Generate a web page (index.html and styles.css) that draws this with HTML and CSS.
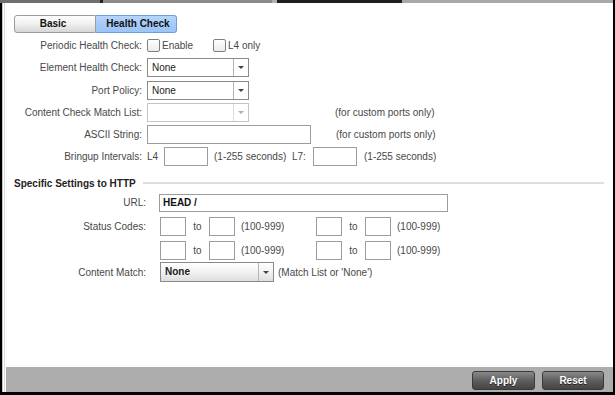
FILE: index.html
```html
<!DOCTYPE html>
<html>
<head>
<meta charset="utf-8">
<link rel="stylesheet" href="styles.css">
</head>
<body>
<div class="page">
  <div class="topstrip">
    <span class="ts ts-a"></span><span class="ts ts-tick"></span><span class="ts ts-b"></span><span class="ts ts-tick2"></span><span class="ts ts-d"></span><span class="ts ts-c"></span>
  </div>
  <div class="frame">
    <div class="wrap">
      <div class="content">
        <div class="tabs">
          <div class="tab tab-basic">Basic</div>
          <div class="tab tab-active">Health Check</div>
        </div>

        <div class="form general">
          <div class="lbl">Periodic Health Check:</div>
          <div class="ctl">
            <span class="cb"></span><span class="cb-text w-enable">Enable</span>
            <span class="cb"></span><span class="cb-text">L4 only</span>
          </div>

          <div class="lbl">Element Health Check:</div>
          <div class="ctl">
            <div class="sel w102"><span class="val">None</span><span class="arr"><i></i></span></div>
          </div>

          <div class="lbl">Port Policy:</div>
          <div class="ctl">
            <div class="sel w102"><span class="val">None</span><span class="arr"><i></i></span></div>
          </div>

          <div class="lbl">Content Check Match List:</div>
          <div class="ctl">
            <div class="sel w102 disabled"><span class="val"></span><span class="arr"><i></i></span></div>
            <span class="note note-cc">(for custom ports only)</span>
          </div>

          <div class="lbl">ASCII String:</div>
          <div class="ctl">
            <div class="inp w164"></div>
            <span class="note note-ascii">(for custom ports only)</span>
          </div>

          <div class="lbl">Bringup Intervals:</div>
          <div class="ctl">
            <span class="w17">L4</span>
            <div class="inp w44"></div>
            <span class="secs">(1-255 seconds)</span>
            <span class="w21">L7:</span>
            <div class="inp w44"></div>
            <span class="secs2">(1-255 seconds)</span>
          </div>
        </div>

        <div class="section-head">
          <span class="section-title">Specific Settings to HTTP</span>
          <span class="rule"></span>
        </div>

        <div class="form http">
          <div class="lbl">URL:</div>
          <div class="ctl">
            <div class="inp url"><span>HEAD /</span></div>
          </div>

          <div class="lbl">Status Codes:</div>
          <div class="ctl">
            <div class="inp w26"></div><span class="to">to</span><div class="inp w26"></div><span class="range">(100-999)</span>
            <div class="inp w26"></div><span class="to">to</span><div class="inp w26"></div><span class="range">(100-999)</span>
          </div>

          <div class="lbl"></div>
          <div class="ctl">
            <div class="inp w26"></div><span class="to">to</span><div class="inp w26"></div><span class="range">(100-999)</span>
            <div class="inp w26"></div><span class="to">to</span><div class="inp w26"></div><span class="range">(100-999)</span>
          </div>

          <div class="lbl">Content Match:</div>
          <div class="ctl">
            <div class="sel cm"><span class="val">None</span><span class="arr"><i></i></span></div>
            <span class="note note-cm">(Match List or 'None')</span>
          </div>
        </div>
      </div>
      <div class="footer">
        <div class="btn">Apply</div>
        <div class="btn">Reset</div>
      </div>
    </div>
  </div>
</div>
</body>
</html>
```

FILE: styles.css
```css
* { box-sizing: border-box; }
html, body { margin: 0; padding: 0; }
body {
  width: 615px;
  height: 395px;
  background: #000;
  font-family: "Liberation Sans", Arial, sans-serif;
  font-size: 10px;
  color: #3c3c3c;
  overflow: hidden;
}
.page {
  width: 615px;
  height: 395px;
  background: #000;
}
.topstrip {
  display: flex;
  height: 3px;
  width: 613px;
}
.ts { height: 3px; }
.ts-a { width: 100px; background: #6e6e6e; }
.ts-tick { width: 3px; background: #222; }
.ts-b { width: 169px; background: #8a8a8a; }
.ts-tick2 { width: 5px; background: #b0b0b0; }
.ts-d { width: 125px; background: #1e1e1e; }
.ts-c { flex: 1; background: #a8a8a8; }

.frame {
  margin-left: 2px;
  width: 611px;
  height: 389px;
  border-left: 1px solid #c6c6c6;
  padding-left: 1px;
  background: #fff;
}
.wrap {
  height: 389px;
  border-left: 1px solid #dcdcdc;
  padding-left: 1px;
  display: flex;
  flex-direction: column;
}
.content {
  height: 364px;
  background: #fff;
}

/* Tabs */
.tabs {
  display: flex;
  padding: 12px 0 0 8px;
  height: 30px;
}
.tab {
  height: 18px;
  line-height: 16px;
  text-align: center;
  font-weight: bold;
  color: #111;
  font-size: 10px;
}
.tab-basic {
  width: 82px;
  border: 1px solid #9c9c9c;
  border-radius: 3px 0 0 3px;
  background: linear-gradient(#fdfdfd, #f0f0f0 50%, #d6d6d6);
  padding-right: 4px;
}
.tab-active {
  width: 81px;
  border: 1px solid #6d9fe0;
  border-left: none;
  border-radius: 0 3px 3px 0;
  background: linear-gradient(#b6d5fa, #a3c9f7 60%, #9cc4f5);
  padding-left: 4px;
}

/* Forms */
.form {
  display: grid;
  align-items: center;
}
.general {
  grid-template-columns: 136px 1fr;
  column-gap: 5px;
  grid-template-rows: 22px 23px 22px 22px 22px 23px;
  margin-top: 1px;
}
.http {
  grid-template-columns: 140px 1fr;
  column-gap: 14px;
  grid-template-rows: 23px 24px 24px 20px;
}
.lbl {
  text-align: right;
  white-space: nowrap;
  color: #484848;
}
.ctl {
  display: flex;
  align-items: center;
  white-space: nowrap;
  color: #484848;
}

/* Checkbox */
.cb {
  width: 13px;
  height: 13px;
  border: 1px solid #808080;
  border-radius: 2px;
  background: linear-gradient(#ffffff, #ececec);
}
.cb-text { margin-left: 2px; }
.w-enable { width: 51px; }

/* Select */
.sel {
  height: 19px;
  border: 1px solid #8a8a8a;
  display: flex;
  background: #fff;
  color: #222;
}
.sel .val {
  flex: 1;
  padding-left: 4px;
  line-height: 17px;
}
.sel .arr {
  width: 15px;
  border-left: 1px solid #b4b4b4;
  display: flex;
  align-items: center;
  justify-content: center;
}
.sel .arr i {
  display: block;
  width: 0;
  height: 0;
  border-left: 3px solid transparent;
  border-right: 3px solid transparent;
  border-top: 3px solid #444;
}
.w102 { width: 102px; }
.sel.disabled { border-color: #c4c4c4; }
.sel.disabled .arr { border-left-color: #dcdcdc; }
.sel.disabled .arr i { border-top-color: #b0b0b0; }
.sel.cm {
  width: 114px;
  height: 20px;
  background: linear-gradient(#ffffff, #f2f2f2 50%, #dedede);
  font-weight: bold;
}
.sel.cm .val { line-height: 18px; }

/* Inputs */
.inp {
  height: 19px;
  border: 1px solid #9c9c9c;
  background: #fff;
}
.w164 { width: 164px; }
.w44 { width: 44px; }
.w26 { width: 26px; }
.w17 { width: 17px; }
.w21 { width: 21px; }
.url {
  width: 289px;
  height: 18px;
  margin-left: -1px;
  padding-left: 3px;
  line-height: 16px;
  font-weight: bold;
  color: #111;
}

.note-cc { margin-left: 86px; }
.note-ascii { margin-left: 25px; }
.note-cm { margin-left: 4px; }
.secs { width: 84px; padding-left: 6px; }
.secs2 { padding-left: 7px; }
.to { width: 23px; text-align: center; }
.range { width: 81px; padding-left: 6px; }

/* Section head */
.section-head {
  display: flex;
  align-items: center;
  padding: 9px 9px 0 8px;
  height: 23px;
}
.section-title {
  font-weight: bold;
  color: #222;
  line-height: 14px;
  width: 129px;
}
.rule {
  flex: 1;
  height: 2px;
  background: #dedede;
  margin-top: -3px;
}

/* Footer */
.footer {
  height: 25px;
  background: #adadad;
  display: flex;
  justify-content: flex-end;
  align-items: flex-start;
  padding: 4px 9px 0 0;
  gap: 7px;
}
.btn {
  width: 62px;
  height: 19px;
  border: 1px solid #3a3a3a;
  border-radius: 3px;
  background: linear-gradient(#8a8a8a, #5e5e5e 50%, #454545);
  color: #fff;
  font-weight: bold;
  text-align: center;
  line-height: 17px;
  text-shadow: 0 1px 0 #222;
}
.btn:first-child { width: 63px; }
```
